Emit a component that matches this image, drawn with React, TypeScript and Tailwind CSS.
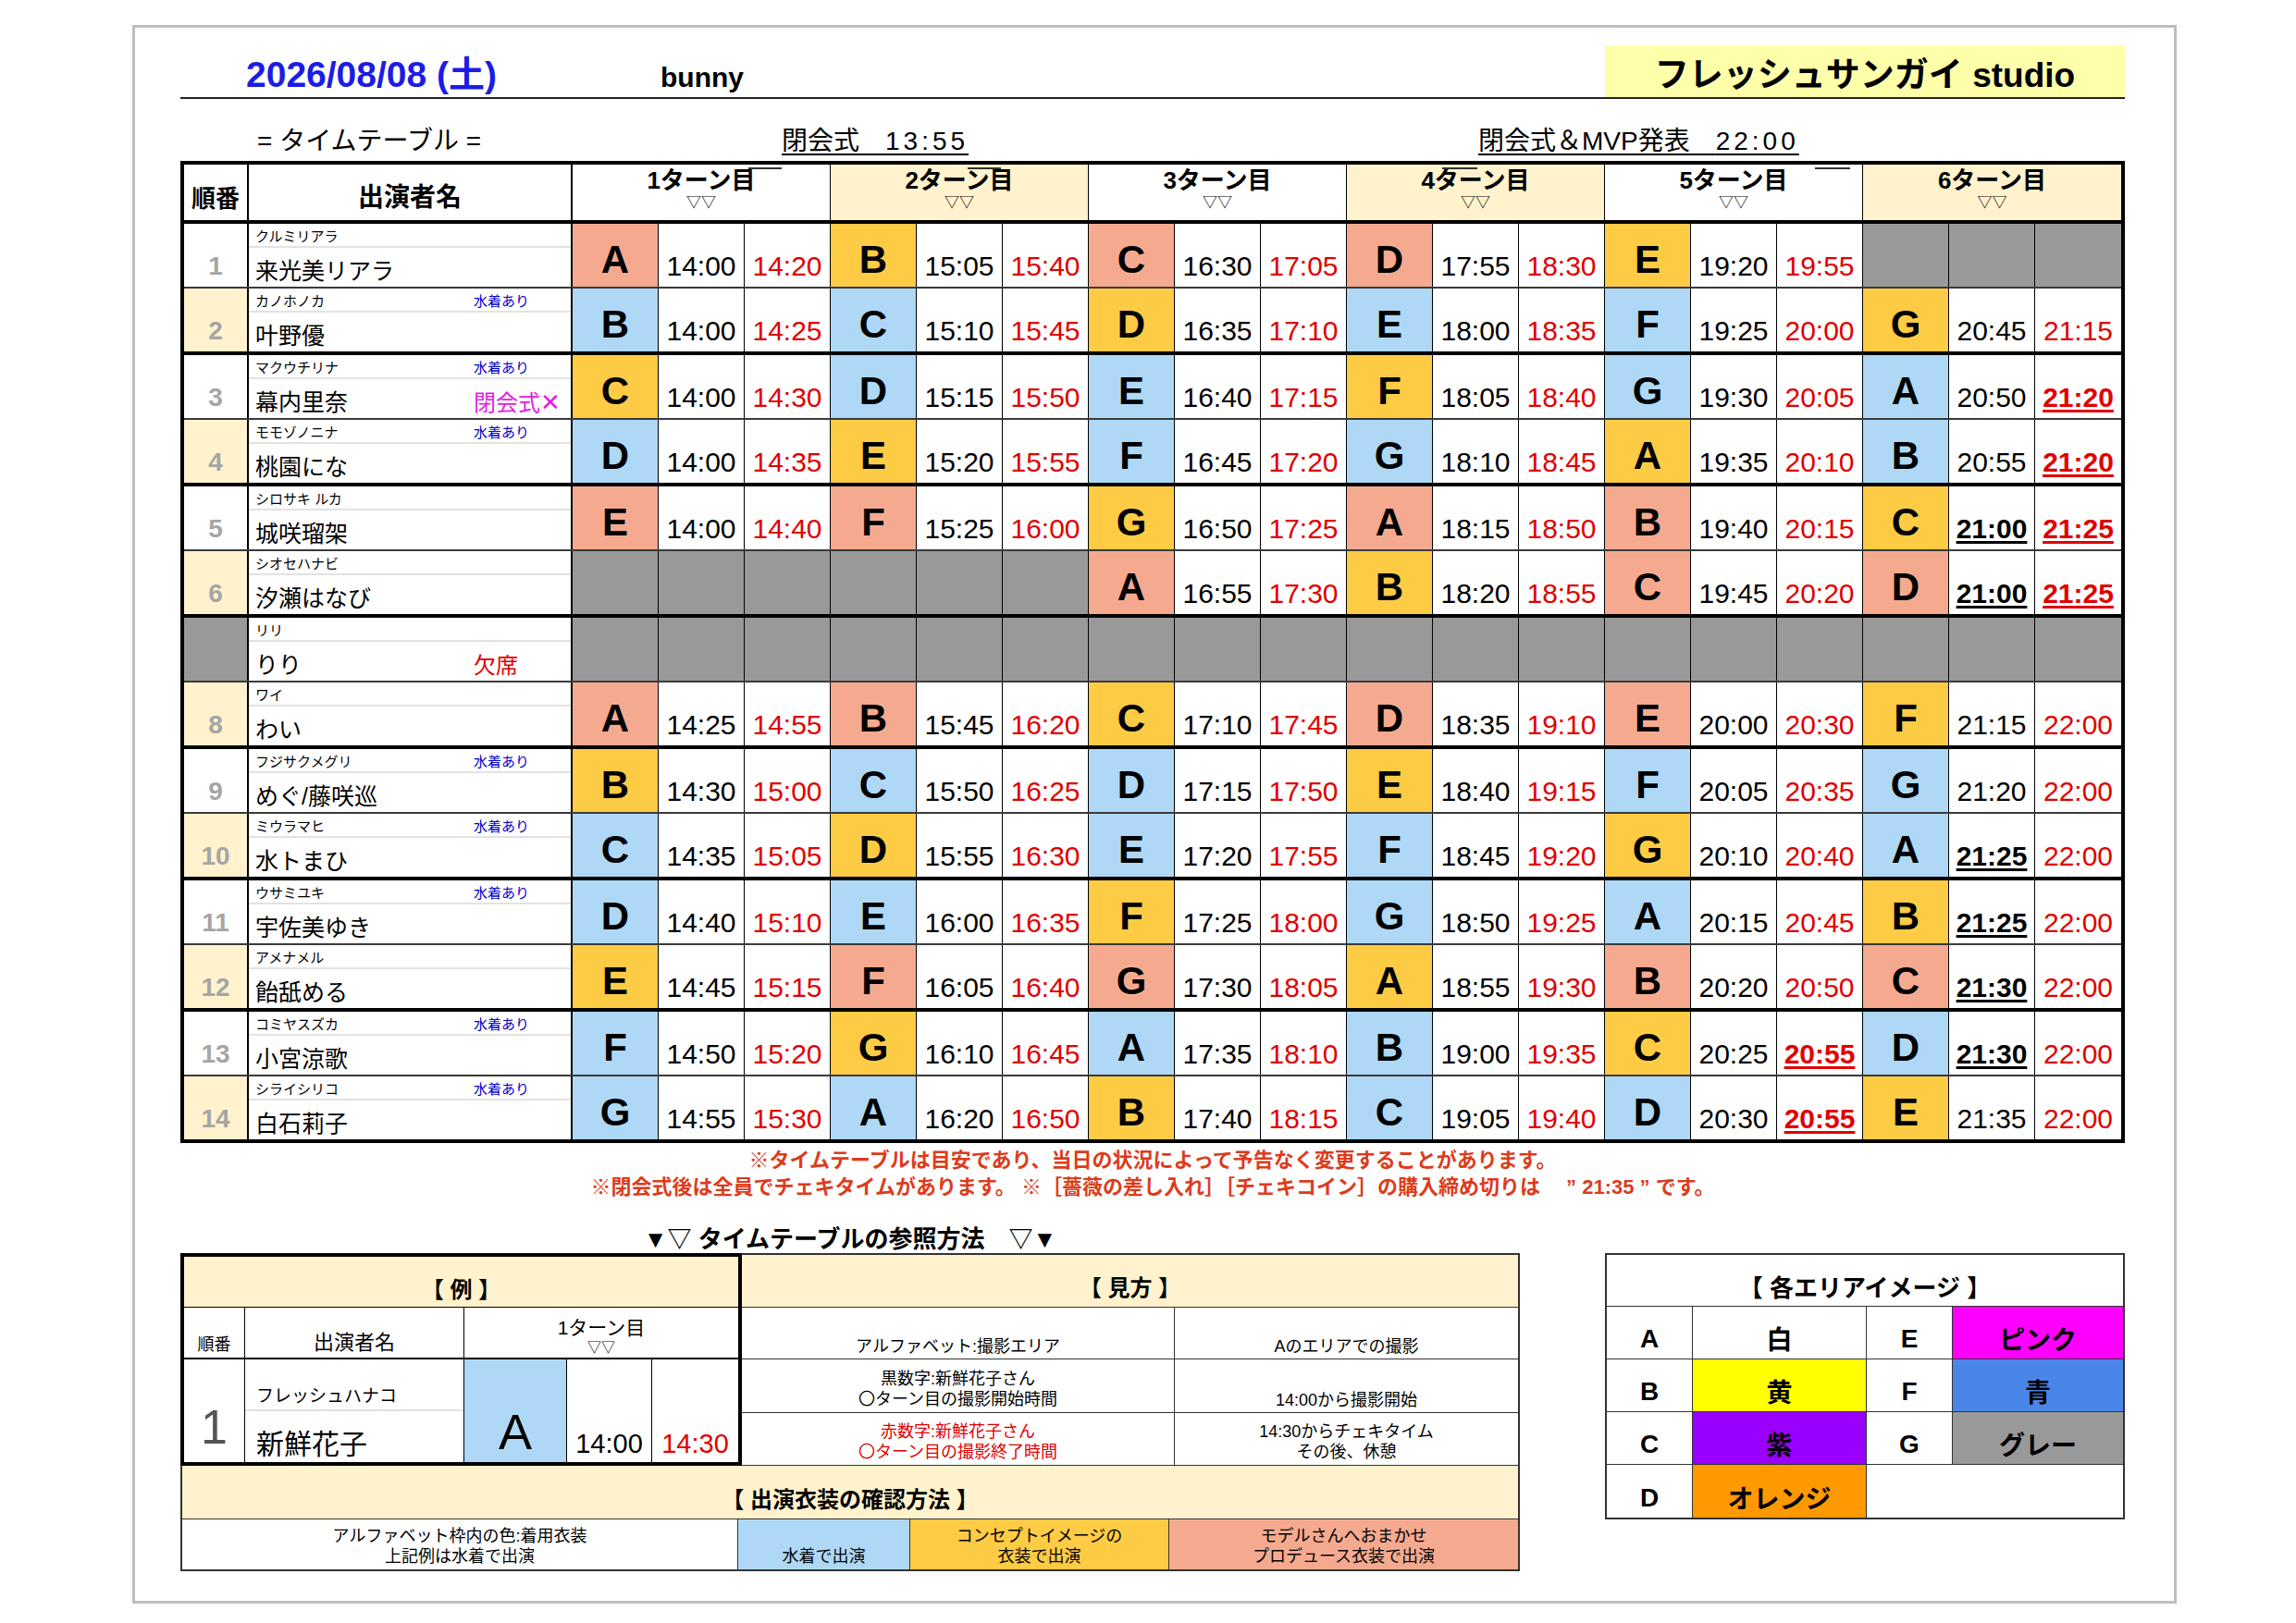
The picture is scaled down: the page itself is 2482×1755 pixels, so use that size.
type Turn = string | null;

type Row = {
  kana: string;
  name: string;
  swim?: boolean;
  tag?: string;
  tagClass?: string;
  absent?: boolean;
  turns: Turn[];
};

// S = salmon (モデルさんへおまかせ), Y = yellow (コンセプト), B = blue (水着)
const bgMap: Record<string, string> = {
  S: 'bg-[#f5aa90]',
  Y: 'bg-[#fecb45]',
  B: 'bg-[#aed8f5]',
};

const rows: Row[] = [
  { kana: 'クルミリアラ', name: '来光美リアラ', turns: ['A S 14:00 14:20', 'B Y 15:05 15:40', 'C S 16:30 17:05', 'D S 17:55 18:30', 'E Y 19:20 19:55', null] },
  { kana: 'カノホノカ', name: '叶野優', swim: true, turns: ['B B 14:00 14:25', 'C B 15:10 15:45', 'D Y 16:35 17:10', 'E B 18:00 18:35', 'F B 19:25 20:00', 'G Y 20:45 21:15'] },
  { kana: 'マクウチリナ', name: '幕内里奈', swim: true, tag: '閉会式', tagClass: 'text-[#e619e6]', turns: ['C Y 14:00 14:30', 'D B 15:15 15:50', 'E B 16:40 17:15', 'F Y 18:05 18:40', 'G B 19:30 20:05', 'A B 20:50 *21:20'] },
  { kana: 'モモゾノニナ', name: '桃園にな', swim: true, turns: ['D B 14:00 14:35', 'E Y 15:20 15:55', 'F B 16:45 17:20', 'G B 18:10 18:45', 'A Y 19:35 20:10', 'B B 20:55 *21:20'] },
  { kana: 'シロサキ ルカ', name: '城咲瑠架', turns: ['E S 14:00 14:40', 'F S 15:25 16:00', 'G Y 16:50 17:25', 'A S 18:15 18:50', 'B S 19:40 20:15', 'C Y *21:00 *21:25'] },
  { kana: 'シオセハナビ', name: '汐瀬はなび', turns: [null, null, 'A S 16:55 17:30', 'B Y 18:20 18:55', 'C S 19:45 20:20', 'D S *21:00 *21:25'] },
  { kana: 'リリ', name: 'りり', tag: '欠席', tagClass: 'text-[#e00000]', absent: true, turns: [null, null, null, null, null, null] },
  { kana: 'ワイ', name: 'わい', turns: ['A S 14:25 14:55', 'B S 15:45 16:20', 'C Y 17:10 17:45', 'D S 18:35 19:10', 'E S 20:00 20:30', 'F Y 21:15 22:00'] },
  { kana: 'フジサクメグリ', name: 'めぐ/藤咲巡', swim: true, turns: ['B Y 14:30 15:00', 'C B 15:50 16:25', 'D B 17:15 17:50', 'E Y 18:40 19:15', 'F B 20:05 20:35', 'G B 21:20 22:00'] },
  { kana: 'ミウラマヒ', name: '水トまひ', swim: true, turns: ['C B 14:35 15:05', 'D Y 15:55 16:30', 'E B 17:20 17:55', 'F B 18:45 19:20', 'G Y 20:10 20:40', 'A B *21:25 22:00'] },
  { kana: 'ウサミユキ', name: '宇佐美ゆき', swim: true, turns: ['D B 14:40 15:10', 'E B 16:00 16:35', 'F Y 17:25 18:00', 'G B 18:50 19:25', 'A B 20:15 20:45', 'B Y *21:25 22:00'] },
  { kana: 'アメナメル', name: '飴舐める', turns: ['E Y 14:45 15:15', 'F S 16:05 16:40', 'G S 17:30 18:05', 'A Y 18:55 19:30', 'B S 20:20 20:50', 'C S *21:30 22:00'] },
  { kana: 'コミヤスズカ', name: '小宮涼歌', swim: true, turns: ['F B 14:50 15:20', 'G Y 16:10 16:45', 'A B 17:35 18:10', 'B B 19:00 19:35', 'C Y 20:25 *20:55', 'D B *21:30 22:00'] },
  { kana: 'シライシリコ', name: '白石莉子', swim: true, turns: ['G B 14:55 15:30', 'A B 16:20 16:50', 'B Y 17:40 18:15', 'C B 19:05 19:40', 'D B 20:30 *20:55', 'E Y 21:35 22:00'] },
];

const TimeCell = ({ value, red, last }: { value: string; red?: boolean; last?: boolean }) => {
  const bold = value.startsWith('*');
  const text = bold ? value.slice(1) : value;
  return (
    <div className={`flex items-end justify-center pb-[7px] ${last ? '' : 'border-r border-black'}`}>
      <span
        className={`text-[30px] leading-none ${red ? 'text-[#e00000]' : 'text-black'} ${
          bold ? 'font-bold underline decoration-[3px] underline-offset-[3px]' : ''
        }`}
      >
        {text}
      </span>
    </div>
  );
};

const TurnCells = ({ turn, last }: { turn: Turn; last: boolean }) => {
  if (!turn) {
    return (
      <>
        <div className="bg-[#999999] border-r border-black" />
        <div className="bg-[#999999] border-r border-black" />
        <div className={last ? 'bg-[#999999]' : 'bg-[#999999] border-r border-black'} />
      </>
    );
  }
  const [letter, color, start, end] = turn.split(' ');
  return (
    <>
      <div className={`flex items-end justify-center pb-[8px] border-r border-black ${bgMap[color]}`}>
        <span className="text-[42px] font-bold leading-none">{letter}</span>
      </div>
      <TimeCell value={start} />
      <TimeCell value={end} red last={last} />
    </>
  );
};

const TableRow = ({ row, n }: { row: Row; n: number }) => {
  const sizing =
    n === 14
      ? 'h-[68px]'
      : n % 2 === 0
        ? 'h-[72px] border-b-4 border-black'
        : 'h-[70px] border-b-2 border-[#3a3a3a]';
  const noBg = row.absent ? 'bg-[#999999]' : n % 2 === 0 ? 'bg-[#fff2cc]' : 'bg-white';
  return (
    <div className={`grid grid-cols-[70px_350px_repeat(18,93px)] ${sizing}`}>
      <div className={`flex items-end justify-center pb-[8px] border-r-2 border-black ${noBg}`}>
        {!row.absent && <span className="text-[28px] font-bold leading-none text-[#a5a5a5]">{n}</span>}
      </div>
      <div className="flex flex-col border-r-2 border-black bg-white">
        <div className="h-[26px] flex items-end pl-[7px] pb-[3px] border-b-2 border-[#e2e2e2]">
          <span className="w-[236px] text-[15px] leading-none">{row.kana}</span>
          {row.swim && <span className="text-[15px] leading-none text-[#0000cc]">水着あり</span>}
        </div>
        <div className="flex-1 flex items-end pl-[7px] pb-[4px]">
          <span className="w-[236px] text-[25px] leading-none">{row.name}</span>
          {row.tag && (
            <span className={`text-[24px] leading-none ${row.tagClass}`}>
              {row.tag}
              {row.tag === '閉会式' && (
                <span className="font-['Noto_Sans_CJK_JP',sans-serif] text-[26px]">✕</span>
              )}
            </span>
          )}
        </div>
      </div>
      {row.turns.map((t, i) => (
        <TurnCells key={i} turn={t} last={i === 5} />
      ))}
    </div>
  );
};

const turnHeads = [
  { label: '1ターン目', bg: 'bg-white border-r border-black' },
  { label: '2ターン目', bg: 'bg-[#fff2cc] border-r border-black' },
  { label: '3ターン目', bg: 'bg-white border-r border-black' },
  { label: '4ターン目', bg: 'bg-[#fff2cc] border-r border-black' },
  { label: '5ターン目', bg: 'bg-white border-r border-black' },
  { label: '6ターン目', bg: 'bg-[#fff2cc]' },
];

const Schedule = () => (
  <div className="w-[2102px] border-4 border-black">
    <div className="relative grid grid-cols-[70px_350px_repeat(6,279px)] h-[64px] border-b-4 border-black">
      <div className="flex items-end justify-center pb-[10px] border-r-2 border-black">
        <span className="text-[26px] font-bold leading-none">順番</span>
      </div>
      <div className="flex items-end justify-center pb-[10px] border-r-2 border-black">
        <span className="text-[28px] font-bold leading-none">出演者名</span>
      </div>
      {turnHeads.map((h) => (
        <div key={h.label} className={`flex flex-col items-center ${h.bg}`}>
          <span className="mt-[4px] text-[26px] font-bold leading-none">{h.label}</span>
          <span className="mt-[3px] text-[16px] leading-none">▽▽</span>
        </div>
      ))}
      {/* stray rule marks left over in the sheet */}
      <div className="absolute top-[3px] left-[610px] w-[36px] h-[2px] bg-[#333]" />
      <div className="absolute top-[3px] left-[847px] w-[36px] h-[2px] bg-[#333]" />
      <div className="absolute top-[3px] left-[1360px] w-[38px] h-[2px] bg-[#333]" />
      <div className="absolute top-[3px] left-[1763px] w-[38px] h-[2px] bg-[#333]" />
    </div>
    {rows.map((r, i) => (
      <TableRow key={i} row={r} n={i + 1} />
    ))}
  </div>
);

const Legend = () => (
  <div className="w-[1448px] flex flex-col">
    <div className="flex h-[230px]">
      {/* 例 */}
      <div className="w-[607px] border-4 border-black flex flex-col">
        <div className="h-[55px] flex items-end justify-center pb-[6px] bg-[#fff2cc] border-b border-black">
          <span className="text-[24px] font-bold leading-none">【 例 】</span>
        </div>
        <div className="h-[56px] grid grid-cols-[66px_237px_296px] border-b-2 border-black">
          <div className="flex items-end justify-center pb-[5px] border-r border-black">
            <span className="text-[18px] leading-none">順番</span>
          </div>
          <div className="flex items-end justify-center pb-[5px] border-r border-black">
            <span className="text-[22px] leading-none">出演者名</span>
          </div>
          <div className="flex flex-col items-center justify-end pb-[4px]">
            <span className="text-[21px] leading-none">1ターン目</span>
            <span className="mt-[3px] text-[15px] leading-none">▽▽</span>
          </div>
        </div>
        <div className="flex-1 grid grid-cols-[66px_237px_111px_92px_93px]">
          <div className="flex items-end justify-center pb-[12px] border-r border-black">
            <span className="text-[52px] leading-none text-[#555]">1</span>
          </div>
          <div className="flex flex-col border-r border-black">
            <div className="h-[56px] flex items-end pl-[12px] pb-[5px] border-b-2 border-[#e2e2e2]">
              <span className="text-[19px] leading-none">フレッシュハナコ</span>
            </div>
            <div className="flex-1 flex items-end pl-[12px] pb-[4px]">
              <span className="text-[30px] leading-none">新鮮花子</span>
            </div>
          </div>
          <div className="flex items-end justify-center pb-[6px] bg-[#aed8f5] border-r border-black">
            <span className="text-[54px] leading-none">A</span>
          </div>
          <div className="flex items-end justify-center pb-[5px] border-r border-black">
            <span className="text-[29px] leading-none">14:00</span>
          </div>
          <div className="flex items-end justify-center pb-[5px]">
            <span className="text-[29px] leading-none text-[#e00000]">14:30</span>
          </div>
        </div>
      </div>
      {/* 見方 */}
      <div className="flex-1 flex flex-col border-t-2 border-r-2 border-[#333] border-b">
        <div className="h-[57px] flex items-end justify-center pb-[8px] bg-[#fff2cc] border-b border-[#333]">
          <span className="text-[24px] font-bold leading-none">【 見方 】</span>
        </div>
        <div className="h-[56px] grid grid-cols-[468px_1fr] border-b border-[#333]">
          <div className="flex items-end justify-center pb-[4px] border-r border-[#333]">
            <span className="text-[18px] leading-none">アルファベット:撮影エリア</span>
          </div>
          <div className="flex items-end justify-center pb-[4px]">
            <span className="text-[18px] leading-none">Aのエリアでの撮影</span>
          </div>
        </div>
        <div className="h-[58px] grid grid-cols-[468px_1fr] border-b border-[#333]">
          <div className="flex flex-col items-center justify-end pb-[3px] border-r border-[#333] text-[18px] leading-[22px]">
            <span>黒数字:新鮮花子さん</span>
            <span>〇ターン目の撮影開始時間</span>
          </div>
          <div className="flex items-end justify-center pb-[4px]">
            <span className="text-[18px] leading-none">14:00から撮影開始</span>
          </div>
        </div>
        <div className="flex-1 grid grid-cols-[468px_1fr]">
          <div className="flex flex-col items-center justify-end pb-[3px] border-r border-[#333] text-[18px] leading-[22px] text-[#e00000]">
            <span>赤数字:新鮮花子さん</span>
            <span>〇ターン目の撮影終了時間</span>
          </div>
          <div className="flex flex-col items-center justify-end pb-[3px] text-[18px] leading-[22px]">
            <span>14:30からチェキタイム</span>
            <span>その後、休憩</span>
          </div>
        </div>
      </div>
    </div>
    <div className="h-[58px] flex items-end justify-center pb-[8px] bg-[#fff2cc] border-x-2 border-b border-[#333]">
      <span className="text-[24px] font-bold leading-none">【 出演衣装の確認方法 】</span>
    </div>
    <div className="h-[56px] flex border-x-2 border-b-2 border-[#333] text-[18px] leading-[22px]">
      <div className="w-[601px] flex flex-col items-center justify-end pb-[3px] border-r border-[#333]">
        <span>アルファベット枠内の色:着用衣装</span>
        <span>上記例は水着で出演</span>
      </div>
      <div className="w-[186px] flex flex-col items-center justify-end pb-[3px] bg-[#aed8f5] border-r border-[#333]">
        <span>水着で出演</span>
      </div>
      <div className="w-[280px] flex flex-col items-center justify-end pb-[3px] bg-[#fecb45] border-r border-[#333]">
        <span>コンセプトイメージの</span>
        <span>衣装で出演</span>
      </div>
      <div className="flex-1 flex flex-col items-center justify-end pb-[3px] bg-[#f5aa90]">
        <span>モデルさんへおまかせ</span>
        <span>プロデュース衣装で出演</span>
      </div>
    </div>
  </div>
);

const areaRows = [
  { l: 'A', c: '白', bg: 'bg-white', l2: 'E', c2: 'ピンク', bg2: 'bg-[#ff00ff]' },
  { l: 'B', c: '黄', bg: 'bg-[#ffff00]', l2: 'F', c2: '青', bg2: 'bg-[#4a86e8]' },
  { l: 'C', c: '紫', bg: 'bg-[#9900ff]', l2: 'G', c2: 'グレー', bg2: 'bg-[#999999]' },
  { l: 'D', c: 'オレンジ', bg: 'bg-[#ff9900]', l2: '', c2: '', bg2: '' },
];

const AreaTable = () => (
  <div className="w-[562px] border-2 border-[#333] flex flex-col">
    <div className="h-[56px] flex items-end justify-center pb-[6px] border-b border-[#333]">
      <span className="text-[26px] font-bold leading-none">【 各エリアイメージ 】</span>
    </div>
    {areaRows.map((r, i) => (
      <div
        key={r.l}
        className={`h-[57px] grid grid-cols-[93px_188px_93px_1fr] ${i < 3 ? 'border-b border-[#333]' : ''}`}
      >
        <div className="flex items-end justify-center pb-[7px] border-r border-[#333]">
          <span className="text-[28px] font-bold leading-none">{r.l}</span>
        </div>
        <div className={`flex items-end justify-center pb-[5px] border-r border-[#333] ${r.bg}`}>
          <span className="text-[28px] font-bold leading-none">{r.c}</span>
        </div>
        {r.l2 ? (
          <>
            <div className="flex items-end justify-center pb-[7px] border-r border-[#333]">
              <span className="text-[28px] font-bold leading-none">{r.l2}</span>
            </div>
            <div className={`flex items-end justify-center pb-[5px] ${r.bg2}`}>
              <span className="text-[28px] font-bold leading-none">{r.c2}</span>
            </div>
          </>
        ) : (
          <div className="col-span-2" />
        )}
      </div>
    ))}
  </div>
);

export default function App() {
  return (
    <div className="w-[2482px] h-[1755px] bg-white pt-[27px] pl-[143px] text-black font-['Liberation_Sans','Noto_Sans_CJK_JP',sans-serif]">
      <div className="w-[2210px] h-[1707px] border-[3px] border-[#bdbdbd] pl-[49px] pt-[19px]">
        {/* title line */}
        <div className="w-[2102px] h-[58px] flex border-b-2 border-[#222]">
          <div className="w-[519px] flex items-end pl-[71px] pb-[5px]">
            <span className="text-[39px] font-bold leading-none text-[#1c1ce6]">2026/08/08 (土)</span>
          </div>
          <div className="flex-1 flex items-end pb-[6px]">
            <span className="text-[30px] font-bold leading-none">bunny</span>
          </div>
          <div className="w-[562px] flex items-center justify-center pt-[8px] bg-[#ffffaa]">
            <span className="text-[37px] font-bold leading-none">フレッシュサンガイ studio</span>
          </div>
        </div>

        {/* opening / closing */}
        <div className="w-[2102px] h-[67px] flex items-end pb-[7px] text-[28px] leading-none">
          <div className="w-[650px] pl-[83px]">= タイムテーブル =</div>
          <div className="w-[753px]">
            <span className="underline underline-offset-[4px] decoration-[2px]">
              閉会式　<span className="tracking-[4px]">13:55</span>
            </span>
          </div>
          <div>
            <span className="underline underline-offset-[4px] decoration-[2px]">
              閉会式＆MVP発表　<span className="tracking-[4px]">22:00</span>
            </span>
          </div>
        </div>

        <Schedule />

        <div className="w-[2102px] mt-[4px] text-center text-[22px] font-bold leading-[29px] text-[#dd3b1c]">
          <p>※タイムテーブルは目安であり、当日の状況によって予告なく変更することがあります。</p>
          <p>※閉会式後は全員でチェキタイムがあります。 ※［薔薇の差し入れ］［チェキコイン］の購入締め切りは　 ” 21:35 ” です。</p>
        </div>

        <div className="mt-[27px] flex gap-[92px]">
          <div className="flex flex-col">
            <div className="h-[30px] flex items-center justify-center">
              <span className="text-[26px] font-bold leading-none">▼▽ タイムテーブルの参照方法　▽▼</span>
            </div>
            <Legend />
          </div>
          <div className="pt-[30px]">
            <AreaTable />
          </div>
        </div>
      </div>
    </div>
  );
}
